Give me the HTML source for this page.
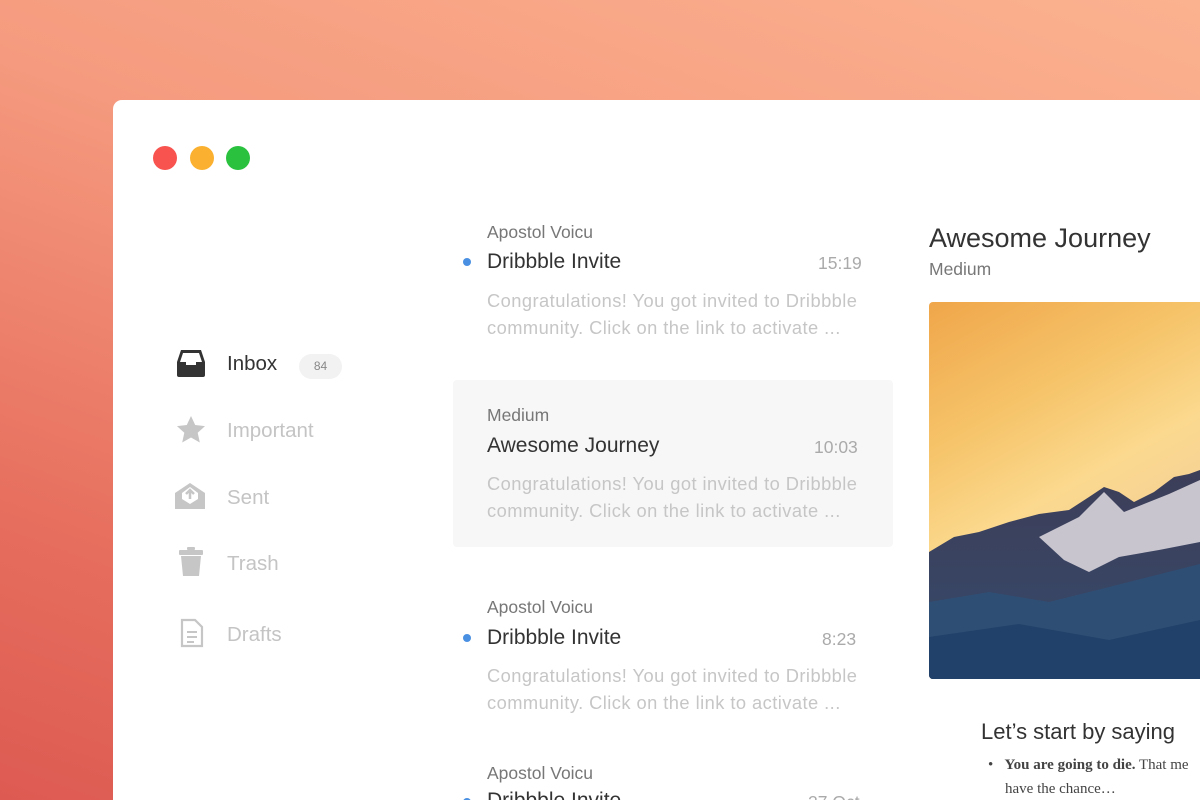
<!DOCTYPE html>
<html style="width:1200px;height:800px;overflow:hidden"><head><style>
*{margin:0;padding:0;box-sizing:border-box}
html{background:#f09070}
body{width:1200px;height:800px;overflow:hidden;position:relative;font-family:"Liberation Sans",sans-serif;
background:linear-gradient(200deg,#fbb28f 0%,#f59a7e 40%,#e7705f 75%,#dd5a52 100%)}
.win{position:absolute;left:113px;top:100px;width:1087px;height:700px;background:#fff;border-radius:9px 0 0 0}
.dot{position:absolute;top:146px;width:24px;height:24px;border-radius:50%}
.a{position:absolute;white-space:nowrap}
.nav{font-size:20.5px;color:#c4c4c4}
.from{font-size:17.5px;color:#777}
.subj{font-size:21px;color:#333}
.time{font-size:17.5px;color:#aaa}
.prev{font-size:18.3px;color:#c6c6c6;line-height:27px;letter-spacing:0.45px}
.bd{width:8px;height:8px;border-radius:50%;background:#4a90e2}
</style></head><body>
<div class="win"></div>
<div class="dot" style="left:153px;background:#f8534f"></div>
<div class="dot" style="left:190px;background:#fbb12f"></div>
<div class="dot" style="left:226px;background:#2ac13f"></div>

<svg class="a" style="left:176px;top:348px" width="30" height="30" viewBox="0 0 30 30"><path d="M5 2h20l4 12v13a2 2 0 0 1-2 2H3a2 2 0 0 1-2-2V14z" fill="#333"/><path d="M7 5h16l3 9h-6v3h-10v-3H4z" fill="#fff"/></svg>
<div class="a nav" style="left:227px;top:352px;color:#333">Inbox</div>
<div class="a" style="left:299px;top:354px;width:43px;height:25px;border-radius:13px;background:#f2f2f2;color:#888;font-size:12px;text-align:center;line-height:25px">84</div>
<svg class="a" style="left:176px;top:415px" width="30" height="30" viewBox="0 0 30 30"><path d="M15 1l4.2 9 9.8 1.1-7.3 6.6 2.1 9.8L15 22.5 6.2 27.5l2.1-9.8L1 11.1 10.8 10z" fill="#c6c6c6"/></svg>
<div class="a nav" style="left:227px;top:419px">Important</div>
<svg class="a" style="left:175px;top:482px" width="30" height="28" viewBox="0 0 30 28"><path d="M15 1L30 11v16H0V11z" fill="#c6c6c6"/><path d="M15 5l8 6v6l-8 5-8-5v-6z" fill="#fff"/><path d="M15 8v9M11 12l4-4 4 4" stroke="#c6c6c6" stroke-width="2.5" fill="none"/></svg>
<div class="a nav" style="left:227px;top:486px">Sent</div>
<svg class="a" style="left:179px;top:547px" width="24" height="30" viewBox="0 0 24 30"><rect x="8" y="0" width="8" height="3" rx="1" fill="#c6c6c6"/><rect x="0" y="3" width="24" height="5" rx="1" fill="#c6c6c6"/><path d="M2 9h20l-2 20H4z" fill="#c6c6c6"/></svg>
<div class="a nav" style="left:227px;top:552px">Trash</div>
<svg class="a" style="left:180px;top:618px" width="24" height="30" viewBox="0 0 24 30"><path d="M2 2h13l7 7v19H2z" fill="none" stroke="#c6c6c6" stroke-width="2.2"/><path d="M7 14h10M7 19h10M7 24h7" stroke="#c6c6c6" stroke-width="2"/></svg>
<div class="a nav" style="left:227px;top:623px">Drafts</div>

<div class="a" style="left:453px;top:380px;width:440px;height:167px;background:#f7f7f7;border-radius:4px"></div>

<div class="a from" style="left:487px;top:222px">Apostol Voicu</div>
<div class="a bd" style="left:463px;top:258px"></div>
<div class="a subj" style="left:487px;top:250px">Dribbble Invite</div>
<div class="a time" style="left:818px;top:253px">15:19</div>
<div class="a prev" style="left:487px;top:287px">Congratulations! You got invited to Dribbble<br>community. Click on the link to activate ...</div>

<div class="a from" style="left:487px;top:405px">Medium</div>
<div class="a subj" style="left:487px;top:434px">Awesome Journey</div>
<div class="a time" style="left:814px;top:437px">10:03</div>
<div class="a prev" style="left:487px;top:470px">Congratulations! You got invited to Dribbble<br>community. Click on the link to activate ...</div>

<div class="a from" style="left:487px;top:597px">Apostol Voicu</div>
<div class="a bd" style="left:463px;top:634px"></div>
<div class="a subj" style="left:487px;top:626px">Dribbble Invite</div>
<div class="a time" style="left:822px;top:629px">8:23</div>
<div class="a prev" style="left:487px;top:662px">Congratulations! You got invited to Dribbble<br>community. Click on the link to activate ...</div>

<div class="a from" style="left:487px;top:763px">Apostol Voicu</div>
<div class="a bd" style="left:463px;top:798px"></div>
<div class="a subj" style="left:487px;top:789px">Dribbble Invite</div>
<div class="a time" style="left:808px;top:792px">27 Oct</div>

<div class="a" style="left:929px;top:223px;font-size:27px;color:#333">Awesome Journey</div>
<div class="a" style="left:929px;top:259px;font-size:17.5px;color:#777">Medium</div>
<svg class="a" style="left:929px;top:302px;border-radius:4px 0 0 4px" width="271" height="377" viewBox="0 0 271 377">
<defs><linearGradient id="s" x1="0" y1="0" x2="0.4" y2="1"><stop offset="0" stop-color="#f0a64a"/><stop offset="0.35" stop-color="#f6c46a"/><stop offset="0.6" stop-color="#fbd98e"/><stop offset="1" stop-color="#f0c8a0"/></linearGradient>
<linearGradient id="m" x1="0" y1="0" x2="0" y2="1"><stop offset="0" stop-color="#3d3e58"/><stop offset="1" stop-color="#354a6c"/></linearGradient></defs>
<rect width="271" height="377" fill="url(#s)"/>
<path d="M0 250 L25 235 50 230 80 220 110 212 140 208 160 195 175 185 190 190 205 200 225 190 245 175 260 172 271 168 V377 H0Z" fill="url(#m)"/>
<path d="M110 235 L150 215 175 190 195 210 240 192 271 178 V240 L230 248 190 255 160 270 135 258Z" fill="#d8d4dc" opacity="0.9"/>
<path d="M0 300 L60 290 120 300 180 285 271 262 V377H0Z" fill="#2f4e74"/>
<path d="M0 335 L90 322 180 338 271 318 V377H0Z" fill="#22416a"/>
</svg>
<div class="a" style="left:981px;top:719px;font-size:22px;color:#333">Let’s start by saying</div>
<div class="a" style="left:988px;top:757px;font-family:'Liberation Serif',serif;font-size:15px;color:#444">•&nbsp;&nbsp; <b>You are going to die.</b> That me</div>
<div class="a" style="left:1005px;top:781px;font-family:'Liberation Serif',serif;font-size:15px;color:#444">have the chance…</div>
</body></html>
